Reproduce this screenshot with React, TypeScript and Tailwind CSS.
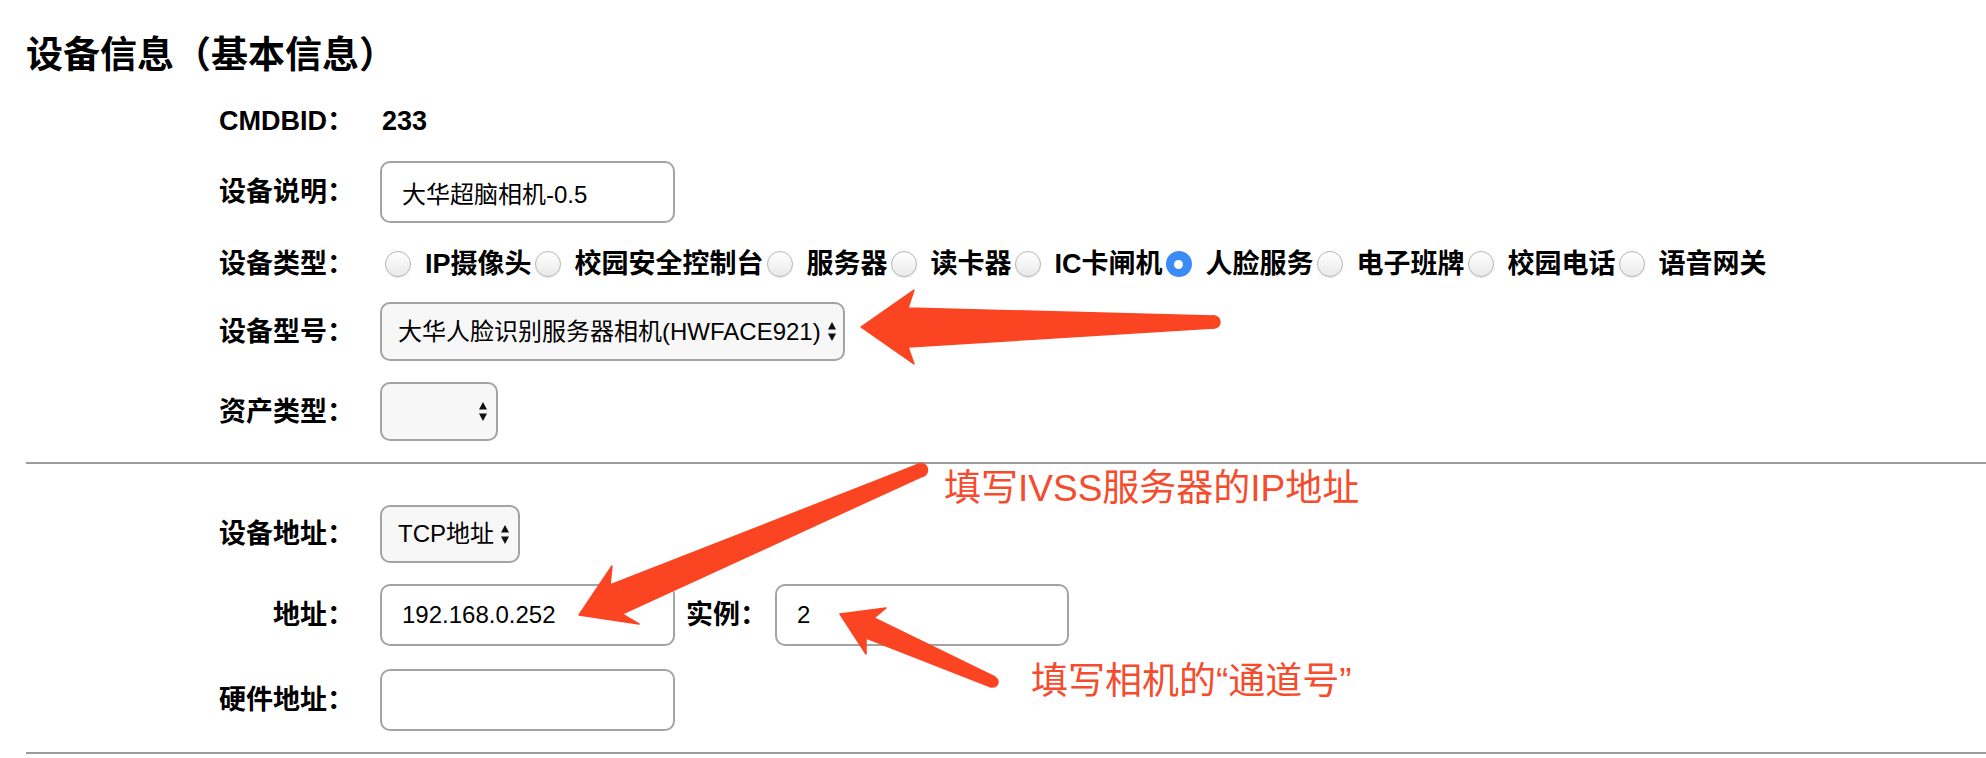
import React from 'react';

const RED = '#fb4422';

function UpDown() {
  return (
    <svg width="10" height="21" viewBox="0 0 10 21" className="shrink-0">
      <polygon points="1,8.5 5,1 9,8.5" fill="#111" />
      <polygon points="1,12.5 9,12.5 5,20" fill="#111" />
    </svg>
  );
}

function Select({ text, className }: { text?: string; className: string }) {
  return (
    <div
      className={`flex h-[58px] items-center justify-between gap-[6px] whitespace-nowrap rounded-[10px] border-2 border-[#a3a3a3] bg-[#f7f7f7] pl-[16px] pr-[8px] text-[24px] ${className}`}
    >
      <span>{text}</span>
      <UpDown />
    </div>
  );
}

function TextInput({ value, className }: { value: string; className: string }) {
  return (
    <input
      readOnly
      value={value}
      className={`h-[62px] rounded-[10px] border-2 border-[#a3a3a3] bg-white px-[20px] text-[24px] outline-none ${className}`}
    />
  );
}

function Radio({ checked }: { checked?: boolean }) {
  if (checked) {
    return (
      <span className="flex h-[26px] w-[26px] shrink-0 items-center justify-center rounded-full bg-[#3b8cf6]">
        <span className="h-[9px] w-[9px] rounded-full bg-white" />
      </span>
    );
  }
  return (
    <span className="h-[26px] w-[26px] shrink-0 rounded-full border border-[#b5b5b5] bg-linear-to-b from-white to-[#e9e9e9] shadow-[0_1px_1px_rgba(0,0,0,0.1)]" />
  );
}

function Row({ label, className, children }: { label: string; className: string; children: React.ReactNode }) {
  return (
    <div className={`flex items-center ${className}`}>
      <div className="w-[328px] shrink-0 text-right text-[27px] font-bold leading-[40px]">{label}</div>
      <div className="ml-[26px] flex items-center">{children}</div>
    </div>
  );
}

const types = ['IP摄像头', '校园安全控制台', '服务器', '读卡器', 'IC卡闸机', '人脸服务', '电子班牌', '校园电话', '语音网关'];

export default function App() {
  return (
    <div className="relative h-[758px] w-[1986px] overflow-hidden bg-white font-['Liberation_Sans','Noto_Sans_CJK_SC',sans-serif] text-black">
      <div className="pl-[26px]">
        <h1 className="pt-[34px] text-[37px] font-bold leading-[44px]">设备信息（基本信息）</h1>

        <Row label="CMDBID：" className="mt-[23px] h-[40px]">
          <span className="ml-[2px] text-[27px] font-bold">233</span>
        </Row>

        <Row label="设备说明：" className="mt-[20px]">
          <TextInput value="大华超脑相机-0.5" className="w-[295px]" />
        </Row>

        <Row label="设备类型：" className="mt-[20px] h-[42px]">
          <div className="flex items-center whitespace-nowrap text-[27px] font-bold">
            {types.map((t, i) => (
              <div key={t} className={`flex items-center ${i === 0 ? 'ml-[5px]' : 'ml-[3px]'}`}>
                <Radio checked={t === '人脸服务'} />
                <span className="ml-[14px] leading-[40px]">{t}</span>
              </div>
            ))}
          </div>
        </Row>

        <Row label="设备型号：" className="mt-[17px]">
          <Select text="大华人脸识别服务器相机(HWFACE921)" className="h-[59px] w-[465px]" />
        </Row>

        <Row label="资产类型：" className="mt-[21px]">
          <Select className="h-[59px] w-[118px]" />
        </Row>

        <div className="mt-[21px] h-[2px] bg-[#9b9b9b]" />

        <Row label="设备地址：" className="mt-[41px]">
          <Select text="TCP地址" className="w-[140px]" />
        </Row>

        <Row label="地址：" className="mt-[21px]">
          <TextInput value="192.168.0.252" className="w-[295px]" />
          <span className="ml-[11px] text-[27px] font-bold">实例：</span>
          <TextInput value="2" className="ml-[8px] w-[294px]" />
        </Row>

        <Row label="硬件地址：" className="mt-[23px]">
          <TextInput value="" className="w-[295px]" />
        </Row>

        <div className="mt-[21px] h-[2px] bg-[#9b9b9b]" />
      </div>

      {/* annotations */}
      <svg className="pointer-events-none absolute left-0 top-0" width="1986" height="758" viewBox="0 0 1986 758">
        <g fill={RED} stroke={RED} strokeWidth="1.5" strokeLinejoin="round">
          <polygon points="861,327 914,290 908,308 1214,316 1214,328 908,347 914,364" />
          <circle cx="1214" cy="322" r="6" />
          <polygon points="579,615 612,566 610,585 919,464 923,476 622,614 639,624" />
          <circle cx="921" cy="470" r="6.5" />
          <polygon points="840,614 886,608 874,618 995,677 991,687 866,638 866,654" />
          <circle cx="993" cy="682" r="5" />
        </g>
      </svg>
      <div className="absolute left-[944px] top-[467px] text-[37px] leading-[44px] text-[#f64b2c]">填写IVSS服务器的IP地址</div>
      <div className="absolute left-[1031px] top-[660px] text-[37px] leading-[44px] text-[#f64b2c]">填写相机的“通道号”</div>
    </div>
  );
}
